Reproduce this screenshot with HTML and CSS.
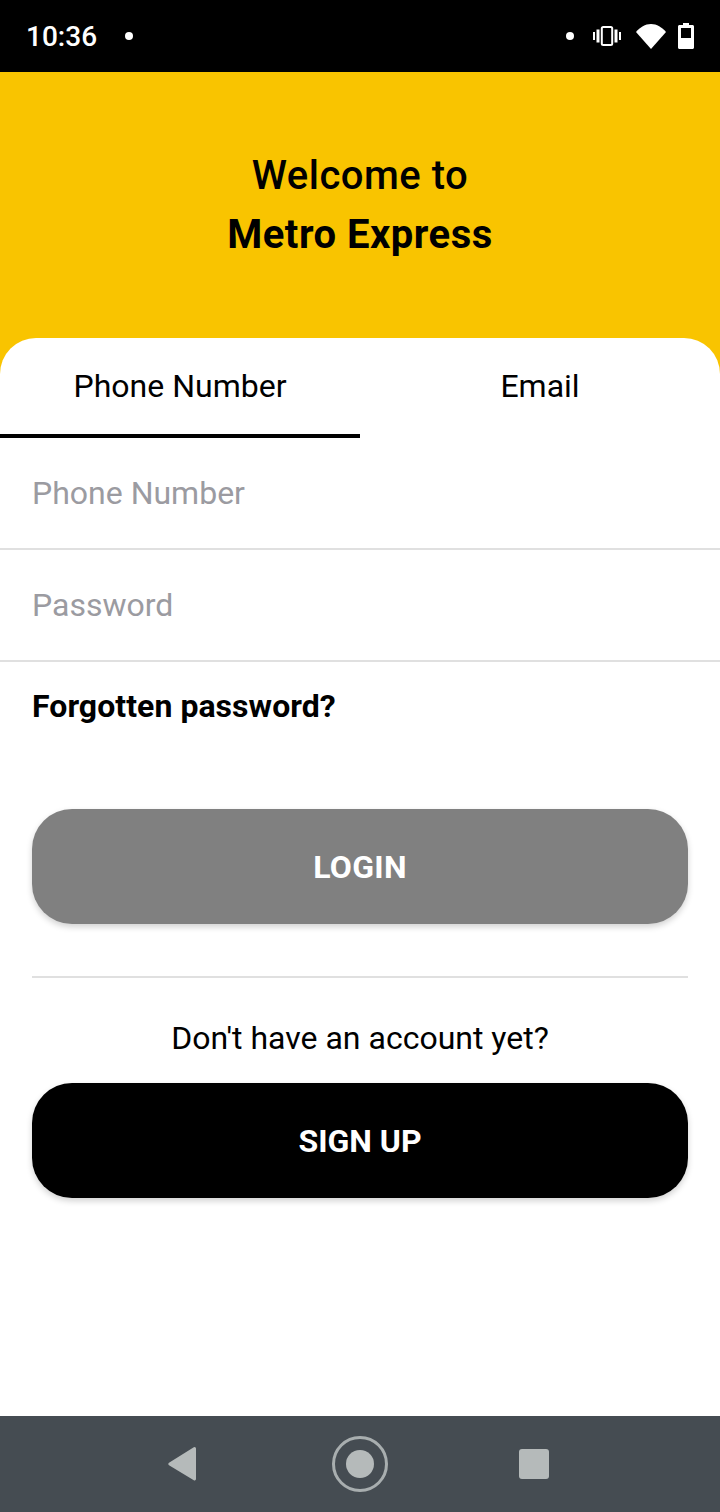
FILE: index.html
```html
<!DOCTYPE html>
<html lang="en">
<head>
    <meta charset="UTF-8">
    <meta name="viewport" content="width=device-width, initial-scale=1.0">
    <title>Metro Express</title>
    <link rel="stylesheet" href="styles.css">
</head>
<body>
    <div class="app">
        <!-- Status bar -->
        <div class="status-bar">
            <div class="status-left">
                <span class="clock">10:36</span>
                <span class="dot"></span>
            </div>
            <div class="status-right">
                <span class="dot"></span>
                <svg class="icon-vibrate" width="28" height="20" viewBox="0 0 28 20">
                    <rect x="8.800" y="1" width="10.400" height="18" rx="1.500" fill="none" stroke="#fff" stroke-width="2"/>
                    <rect x="3.500" y="3.500" width="3" height="13" fill="#fff"/>
                    <rect x="21.500" y="3.500" width="3" height="13" fill="#fff"/>
                    <rect x="0" y="6" width="2" height="8" fill="#fff"/>
                    <rect x="26" y="6" width="2" height="8" fill="#fff"/>
                </svg>
                <svg class="icon-wifi" width="30" height="25" viewBox="0 0 30 25">
                    <path d="M0 8C4 3.500 9.200 0 15 0s11 3.500 15 8L15 25z" fill="#fff"/>
                </svg>
                <svg class="icon-battery" width="16" height="26" viewBox="0 0 16 26">
                    <path d="M5 0h6v2h3.500c.8 0 1.500.7 1.500 1.500V24.500c0 .8-.7 1.500-1.500 1.500H1.500C.7 26 0 25.300 0 24.500V3.500C0 2.700.7 2 1.500 2H5z" fill="#fff"/>
                    <rect x="3" y="5" width="10" height="10" fill="#000"/>
                </svg>
            </div>
        </div>

        <!-- Header -->
        <div class="hero">
            <div class="hero-line">Welcome to</div>
            <div class="hero-line hero-bold">Metro Express</div>
        </div>

        <!-- Login sheet -->
        <div class="sheet">
            <div class="tabs">
                <div class="tab tab-active">Phone Number</div>
                <div class="tab">Email</div>
            </div>

            <div class="field"><span class="placeholder">Phone Number</span></div>
            <div class="field"><span class="placeholder">Password</span></div>

            <div class="content">
                <div class="forgot">Forgotten password?</div>
                <button class="btn btn-login">LOGIN</button>
                <div class="divider"></div>
                <div class="no-account">Don't have an account yet?</div>
                <button class="btn btn-signup">SIGN UP</button>
            </div>
        </div>

        <!-- Navigation bar -->
        <div class="nav-bar">
            <svg class="nav-back" width="30" height="34" viewBox="0 0 30 34">
                <path d="M30 1.500V32a1.500 1.500 0 0 1-2.200 1.300L3 18.200a1.400 1.400 0 0 1 0-2.400L27.800.3A1.500 1.500 0 0 1 30 1.500z" fill="#b5baba"/>
            </svg>
            <svg class="nav-home" width="58" height="58" viewBox="0 0 58 58">
                <circle cx="29" cy="29" r="26.500" fill="none" stroke="#a8aeaf" stroke-width="3"/>
                <circle cx="29" cy="29" r="14" fill="#b5baba"/>
            </svg>
            <div class="nav-square"></div>
        </div>
    </div>
</body>
</html>
```

FILE: styles.css
```css
* {
    margin: 0;
    padding: 0;
    box-sizing: border-box;
    font-family: 'Roboto', 'Liberation Sans', sans-serif;
}

body {
    background-color: white;
}

.app {
    width: 720px;
    height: 1512px;
    display: flex;
    flex-direction: column;
    background-color: #f9c400;
}

.status-bar {
    height: 72px;
    background-color: black;
    color: white;
    display: flex;
    justify-content: space-between;
    align-items: center;
    padding: 0 26px;
}

.status-left {
    display: flex;
    align-items: center;
    gap: 28px;
}

.status-right {
    display: flex;
    align-items: center;
}

.clock {
    font-size: 28px;
    font-weight: 500;
}

.dot {
    width: 8px;
    height: 8px;
    border-radius: 50%;
    background-color: white;
}

.icon-vibrate {
    margin-left: 19px;
}

.icon-wifi {
    margin-left: 15px;
}

.icon-battery {
    margin-left: 12px;
}

.hero {
    height: 266px;
    padding-top: 74px;
    text-align: center;
    color: black;
}

.hero-line {
    font-size: 40px;
    font-weight: 500;
    line-height: 59px;
    letter-spacing: 0.5px;
}

.hero-bold {
    font-weight: 700;
}

.sheet {
    flex: 1;
    background-color: white;
    border-radius: 36px 36px 0 0;
}

.tabs {
    display: flex;
    height: 100px;
}

.tab {
    width: 360px;
    text-align: center;
    font-size: 32px;
    line-height: 96px;
    color: black;
}

.tab-active {
    border-bottom: 4px solid black;
}

.field {
    height: 112px;
    padding: 0 32px;
    display: flex;
    align-items: center;
    border-bottom: 2px solid #e0e0e0;
}

.placeholder {
    font-size: 32px;
    color: #9b9ba1;
}

.content {
    padding: 0 32px;
}

.forgot {
    font-size: 32px;
    font-weight: 700;
    line-height: 36px;
    margin-top: 26px;
    letter-spacing: 0.05px;
    color: black;
}

.btn {
    display: block;
    width: 100%;
    height: 115px;
    border: none;
    border-radius: 40px;
    color: white;
    font-size: 32px;
    font-weight: 700;
    box-shadow: 0 3px 6px rgba(0,0,0,0.18);
}

.btn-login {
    background-color: #808080;
    margin-top: 85px;
    letter-spacing: 0.3px;
}

.btn-signup {
    background-color: black;
}

.divider {
    height: 2px;
    background-color: #e0e0e0;
    margin-top: 52px;
}

.no-account {
    font-size: 32px;
    line-height: 36px;
    text-align: center;
    margin-top: 42px;
    margin-bottom: 27px;
    color: black;
}

.nav-bar {
    height: 96px;
    background-color: #454c52;
    display: flex;
    align-items: center;
    padding-left: 166px;
}

.nav-home {
    margin-left: 135px;
}

.nav-square {
    width: 30px;
    height: 30px;
    margin-left: 130px;
    border-radius: 3px;
    background-color: #b5baba;
}
```
